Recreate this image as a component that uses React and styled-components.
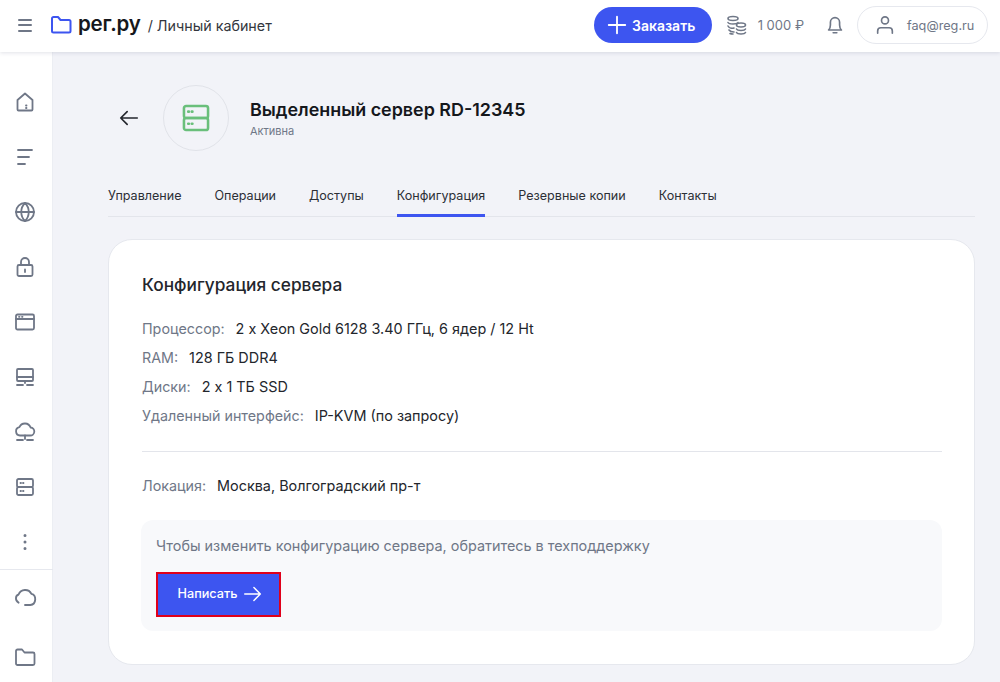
import React from "react";
import styled, { createGlobalStyle } from "styled-components";

const GlobalStyle = createGlobalStyle`
  html, body { margin: 0; padding: 0; height: 100%; background: #f2f3f8; overflow: hidden; }
  body { font-family: Inter, "Noto Sans", sans-serif; color: #1d1f24; }
  * { box-sizing: border-box; }
`;

const Icon = ({ size = 24, color = "#6f7787", width = 1.8, children }) => (
  <svg width={size} height={size} viewBox="0 0 24 24" fill="none" stroke={color} strokeWidth={width} strokeLinecap="round" strokeLinejoin="round">
    {children}
  </svg>
);

const sideIcons = [
  <><path d="M4.500 19.500V10L12 3.500l7.500 6.500v9.500a1 1 0 0 1-1 1h-13a1 1 0 0 1-1-1z" /><path d="M13 15.500h.5M13 18h.5" /></>,
  <><path d="M5 5h14M5 12h11M5 19h7" /></>,
  <><circle cx="12" cy="12" r="9" /><path d="M3 12h18M12 3c-5 5-5 13 0 18M12 3c5 5 5 13 0 18" /></>,
  <><rect x="4.500" y="10" width="15" height="11" rx="1.500" /><path d="M8 10V7a4 4 0 0 1 8 0v3M12 14.500v2.500" /></>,
  <><rect x="3" y="4.500" width="18" height="15" rx="1.500" /><path d="M3 9h18M6 6.800h.5M9 6.800h.5" /></>,
  <><rect x="4" y="4" width="16" height="12" rx="1" /><path d="M4 12h16M12 16v2M4 20h6M14 20h6" /></>,
  <><path d="M7 15.500a4.200 4.200 0 0 1-.6-8.300A6 6 0 0 1 17.600 7.500 4 4 0 0 1 17 15.500z" /><path d="M12 15.500V19M4 20h6M14 20h6" /></>,
  <><rect x="4" y="4" width="16" height="8" rx="1.500" /><rect x="4" y="12" width="16" height="8" rx="1.500" /><path d="M7.500 8h.5M10 8h.5M7.500 16h.5M10 16h.5" /></>,
];

const Page = styled.div`
  width: 1000px;
  height: 682px;
  display: flex;
  flex-direction: column;
  overflow: hidden;
`;

const Header = styled.header`
  height: 52px;
  flex: none;
  background: #fff;
  display: flex;
  align-items: center;
  padding: 0 12px 2px 18px;
  box-shadow: 0 1px 4px rgba(40, 50, 90, 0.14);
  position: relative;
  z-index: 2;
`;

const Burger = styled.div`
  width: 14px;
  height: 13px;
  display: flex;
  flex-direction: column;
  justify-content: space-between;
  margin-right: 17px;
  span { height: 2px; background: #6f7787; border-radius: 1px; }
`;

const LogoWord = styled.span`
  font-size: 20.500px;
  font-weight: 600;
  letter-spacing: -0.2px;
  color: #15171c;
  margin: -3px 0 0 5px;
`;

const Crumb = styled.span`
  font-size: 14.300px;
  color: #33363d;
  margin-left: 7px;
`;

const HeaderRight = styled.div`
  margin-left: auto;
  display: flex;
  align-items: center;
`;

const OrderButton = styled.div`
  width: 118px;
  height: 36px;
  padding-right: 4px;
  border-radius: 18px;
  background: #3d55f0;
  color: #fff;
  font-size: 14px;
  font-weight: 600;
  display: flex;
  align-items: center;
  justify-content: center;
  gap: 4px;
`;

const Balance = styled.div`
  display: flex;
  align-items: center;
  margin-left: 12px;
  font-size: 13px;
  color: #6f7787;
  gap: 10px;
`;

const Bell = styled.div`
  display: flex;
  margin: 0 11px 0 20px;
`;

const UserChip = styled.div`
  width: 131px;
  height: 38px;
  border: 1px solid #e6e8ee;
  border-radius: 19px;
  display: flex;
  align-items: center;
  padding-left: 16px;
  gap: 11px;
  font-size: 12.700px;
  color: #6f7787;
`;

const Body = styled.div`
  flex: 1;
  display: flex;
  min-height: 0;
`;

const Sidebar = styled.nav`
  width: 53px;
  flex: none;
  background: #fff;
  border-right: 1px solid #eceef3;
  padding: 22px 3px 0 0;
  display: flex;
  flex-direction: column;
  align-items: center;
`;

const SideItem = styled.div`
  height: 55px;
  width: 100%;
  flex: none;
  display: flex;
  align-items: center;
  justify-content: center;
  margin-top: ${({ $top }) => $top || 0}px;
`;

const SideDivider = styled.div`
  width: 53px;
  height: 1px;
  flex: none;
  margin-right: -3px;
  background: #e6e8ee;
`;

const Main = styled.main`
  flex: 1;
  padding: 33px 25px 0 55px;
  min-width: 0;
`;

const ServerHead = styled.div`
  display: flex;
  align-items: center;
  height: 66px;
  padding-left: 10px;
`;

const Back = styled.div`
  width: 45px;
  display: flex;
`;

const Badge = styled.div`
  width: 66px;
  height: 66px;
  border: 1px solid #e1e3e9;
  border-radius: 50%;
  display: flex;
  align-items: center;
  justify-content: center;
  margin-right: 21px;
`;

const Title = styled.h1`
  margin: 0;
  font-size: 17.900px;
  line-height: 22px;
  font-weight: 600;
  color: #15171c;
`;

const Status = styled.div`
  font-size: 11px;
  line-height: 14px;
  margin-top: 3px;
  color: #6f7787;
`;

const Tabs = styled.div`
  display: flex;
  gap: 33px;
  margin-top: 24px;
  height: 42px;
  border-bottom: 1px solid #e3e5eb;
`;

const Tab = styled.div`
  height: 42px;
  padding-top: 13px;
  font-size: 12.570px;
  line-height: 16px;
  color: #2c2f36;
  border-bottom: 3px solid ${({ $active }) => ($active ? "#3d55f0" : "transparent")};
`;

const Card = styled.section`
  margin-top: 22px;
  height: 426px;
  background: #fff;
  border: 1px solid #e6e8ee;
  border-radius: 24px;
  padding: 33px 32px 0 33px;
`;

const CardTitle = styled.h2`
  margin: 0 0 17px;
  font-size: 17.300px;
  line-height: 24px;
  font-weight: 500;
  color: #23262c;
`;

const Spec = styled.div`
  font-size: 14.400px;
  line-height: 29px;
  color: #23262c;
  span { font-size: 14.300px; color: #6f7787; margin-right: 11px; }
`;

const Rule = styled.hr`
  border: 0;
  height: 1px;
  margin: 21px 0 19px;
  background: #e3e5eb;
`;

const Note = styled.div`
  height: 111px;
  margin: 20px 0 0 -1px;
  border-radius: 12px;
  background: #f8f9fb;
  padding: 17px 15px 0;
  font-size: 14.400px;
  line-height: 18px;
  color: #6f7787;
`;

const WriteButton = styled.div`
  width: 125px;
  height: 45px;
  margin-top: 17px;
  padding: 0 0 1px 5px;
  background: #3d55f0;
  border: 2px solid #e0001a;
  color: #fff;
  font-size: 12.700px;
  font-weight: 500;
  display: flex;
  align-items: center;
  justify-content: center;
  gap: 5px;
`;

const tabs = ["Управление", "Операции", "Доступы", "Конфигурация", "Резервные копии", "Контакты"];

const specs = [
  ["Процессор:", "2 x Xeon Gold 6128 3.40 ГГц, 6 ядер / 12 Ht"],
  ["RAM:", "128 ГБ DDR4"],
  ["Диски:", "2 x 1 ТБ SSD"],
  ["Удаленный интерфейс:", "IP-KVM (по запросу)"],
];

export default function App() {
  return (
    <Page>
      <GlobalStyle />
      <Header>
        <Burger><span /><span /><span /></Burger>
        <Icon size={24} color="#3d55f0" width={2}>
          <path d="M3 18V5.500A1.500 1.500 0 0 1 4.500 4H9l2.500 3H20a1.500 1.500 0 0 1 1.500 1.500V18a1.500 1.500 0 0 1-1.500 1.500H4.500A1.500 1.500 0 0 1 3 18z" />
        </Icon>
        <LogoWord>рег.ру</LogoWord>
        <Crumb>/ Личный кабинет</Crumb>
        <HeaderRight>
          <OrderButton>
            <Icon size={22} color="#fff" width={2}><path d="M12 3v18M3 12h18" /></Icon>
            Заказать
          </OrderButton>
          <Balance>
            <Icon size={24} width={1.6}>
              <ellipse cx="9" cy="5.500" rx="5" ry="2" />
              <path d="M4 9.500c1 2 9 2 10 0M4 13c1 2 4 2.500 6 2M5 17c1 1.500 3 2 5 2M6 20.500c1 .5 2 .5 3 .5" />
              <ellipse cx="17" cy="12" rx="4.500" ry="2" />
              <path d="M12.500 16c1 2 8 2 9 0M12.500 19.500c1 2 8 2 9 0" />
            </Icon>
            1 000 ₽
          </Balance>
          <Bell>
            <Icon size={22}>
              <path d="M5 17.500c1.500-1.500 2-3 2-5.500V9a5 5 0 0 1 10 0v3c0 2.500.5 4 2 5.500z" />
              <path d="M10 20.500h4" />
            </Icon>
          </Bell>
          <UserChip>
            <Icon size={22}>
              <circle cx="12" cy="7" r="3.800" />
              <path d="M4 21v-2.500A3.500 3.500 0 0 1 7.500 15h9a3.500 3.500 0 0 1 3.500 3.500V21" />
            </Icon>
            faq@reg.ru
          </UserChip>
        </HeaderRight>
      </Header>
      <Body>
        <Sidebar>
          {sideIcons.map((icon, i) => (
            <SideItem key={i}><Icon>{icon}</Icon></SideItem>
          ))}
          <SideItem>
            <Icon color="#6f7787" width={3}><path d="M12 5.500v.01M12 12v.01M12 18.500v.01" /></Icon>
          </SideItem>
          <SideDivider />
          <SideItem>
            <Icon size={28} width={1.6}>
              <path d="M6.500 16C3.500 14.500 3.500 10 6.500 9A6 6 0 0 1 17.500 8.500c4.500 1 4.500 9-1 9.500H12" />
            </Icon>
          </SideItem>
          <SideItem $top={4}>
            <Icon>
              <path d="M3 18.500V6a1.500 1.500 0 0 1 1.500-1.500H9l2.500 3H20A1.500 1.500 0 0 1 21.500 9v9.500A1.500 1.500 0 0 1 20 20H4.500A1.500 1.500 0 0 1 3 18.500z" />
            </Icon>
          </SideItem>
        </Sidebar>
        <Main>
          <ServerHead>
            <Back>
              <Icon size={22} color="#23262c"><path d="M21 12H3M10 5l-7 7 7 7" /></Icon>
            </Back>
            <Badge>
              <Icon size={34} color="#6abf7b" width={1.8}>
                <rect x="3.500" y="3.500" width="17" height="8.500" rx="1.500" />
                <rect x="3.500" y="12" width="17" height="8.500" rx="1.500" />
                <path d="M6.500 7.500h.5M9 7.500h.5M6.500 16h.5M9 16h.5" />
              </Icon>
            </Badge>
            <div>
              <Title>Выделенный сервер RD-12345</Title>
              <Status>Активна</Status>
            </div>
          </ServerHead>
          <Tabs>
            {tabs.map((tab) => (
              <Tab key={tab} $active={tab === "Конфигурация"}>{tab}</Tab>
            ))}
          </Tabs>
          <Card>
            <CardTitle>Конфигурация сервера</CardTitle>
            {specs.map(([label, value]) => (
              <Spec key={label}><span>{label}</span>{value}</Spec>
            ))}
            <Rule />
            <Spec><span>Локация:</span>Москва, Волгоградский пр-т</Spec>
            <Note>
              Чтобы изменить конфигурацию сервера, обратитесь в техподдержку
              <WriteButton>
                Написать
                <Icon size={22} color="#fff" width={1.6}><path d="M3 12h17M13 5l7 7-7 7" /></Icon>
              </WriteButton>
            </Note>
          </Card>
        </Main>
      </Body>
    </Page>
  );
}
